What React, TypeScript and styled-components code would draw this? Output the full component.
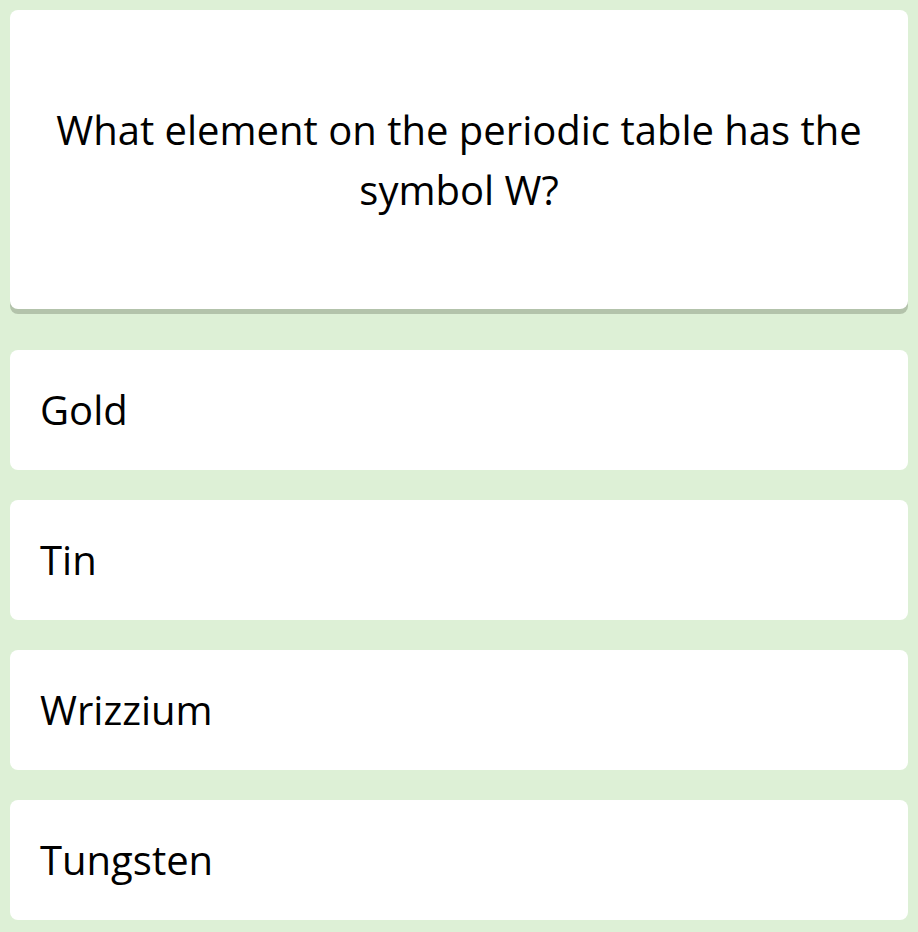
import React from "react";
import styled, { createGlobalStyle } from "styled-components";

const GlobalStyle = createGlobalStyle`
  html, body {
    margin: 0;
    padding: 0;
    background: #ddf0d6;
  }
  body {
    font-family: "Open Sans", "Noto Sans", sans-serif;
    color: #000;
  }
`;

const Page = styled.div`
  display: flex;
  flex-direction: column;
  padding: 10px 10px 12px;
  min-height: 932px;
  box-sizing: border-box;
`;

const QuestionCard = styled.div`
  height: 299px;
  background: #ffffff;
  border-radius: 8px;
  box-shadow: 0 5px 0 #b3c3ab;
  display: flex;
  align-items: center;
  justify-content: center;
  padding: 0 30px;
  box-sizing: border-box;
  margin-bottom: 41px;
`;

const QuestionText = styled.div`
  font-size: 40px;
  line-height: 60px;
  text-align: center;
`;

const Options = styled.div`
  display: flex;
  flex-direction: column;
  gap: 30px;
`;

const Option = styled.div`
  height: 120px;
  background: #ffffff;
  border-radius: 8px;
  display: flex;
  align-items: center;
  padding: 0 30px;
  box-sizing: border-box;
  font-size: 40px;
  line-height: 60px;
  cursor: pointer;
`;

const answers = ["Gold", "Tin", "Wrizzium", "Tungsten"];

export default function App() {
  return (
    <>
      <GlobalStyle />
      <Page>
        <QuestionCard>
          <QuestionText>What element on the periodic table has the symbol W?</QuestionText>
        </QuestionCard>
        <Options>
          {answers.map((a) => (
            <Option key={a}>{a}</Option>
          ))}
        </Options>
      </Page>
    </>
  );
}
